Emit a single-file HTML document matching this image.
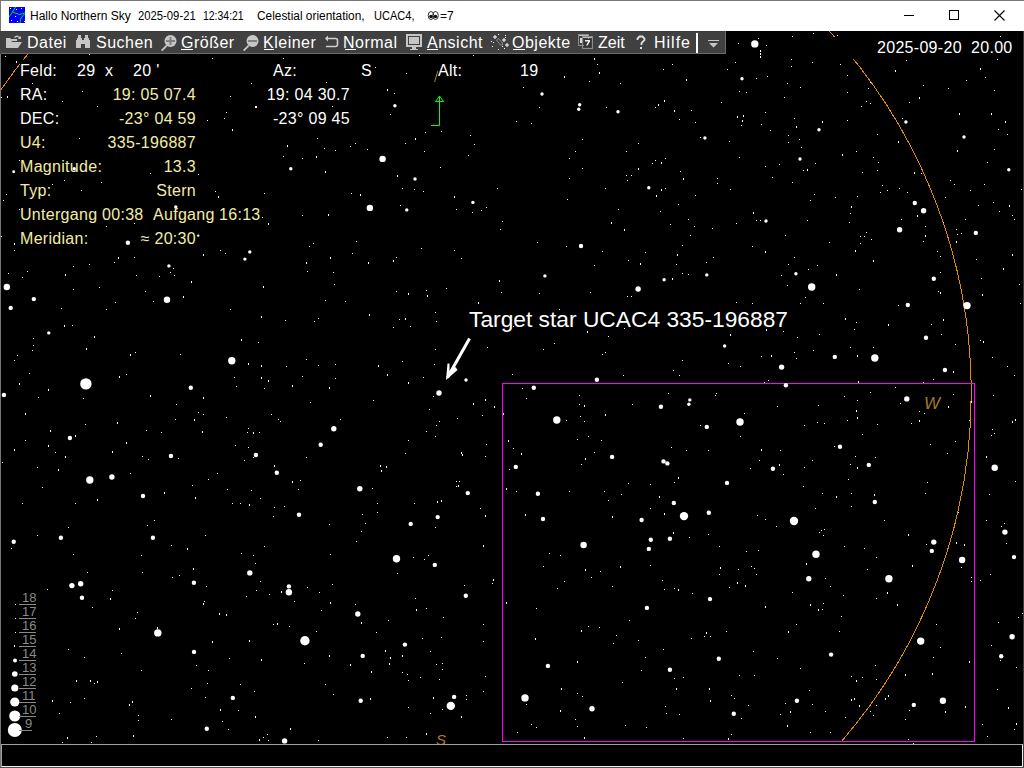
<!DOCTYPE html>
<html><head><meta charset="utf-8">
<style>
html,body{margin:0;padding:0;width:1024px;height:768px;overflow:hidden;background:#000;}
body{position:relative;font-family:"Liberation Sans",sans-serif;}
.a{position:absolute;white-space:pre;line-height:1;}
.t{position:absolute;top:10px;font-size:12px;color:#000;white-space:pre;line-height:1;transform-origin:0 0;}
.m{position:absolute;top:35px;font-size:16px;color:#fff;white-space:pre;line-height:16px;letter-spacing:0.5px;}
.ul{position:absolute;top:49px;height:1px;background:#fff;}
.w{color:#fff;font-size:16px;letter-spacing:0.3px;}
.y{color:#f2eca8;font-size:16px;letter-spacing:0.3px;}
.lg{position:absolute;color:#8a8a8a;font-size:13px;line-height:1;white-space:pre;left:22px;}
.lu{position:absolute;height:1px;background:#8a8a8a;left:19px;width:17px;}
</style></head>
<body>
<!-- title bar -->
<div class="a" style="left:0;top:0;width:1024px;height:31px;background:#fff"></div>
<div class="a" style="left:0;top:0;width:1024px;height:1px;background:#767676"></div>
<div class="a" style="left:0;top:0;width:1px;height:768px;background:#767676"></div>
<div class="a" style="left:1023px;top:31px;width:1px;height:737px;background:#3a3a3a"></div>

<svg class="a" style="left:9px;top:7px" width="16" height="16" viewBox="0 0 16 16">
<rect width="16" height="16" fill="#0000ff"/>
<path d="M6.5 0 L3.5 5 L0 10 M3.5 5 L10.5 7.5 L16 6 M15.5 7 L12 11 L11 16" stroke="#00e000" stroke-width="1" fill="none"/>
<g fill="#fff"><rect x="1" y="1" width="1" height="1"/><rect x="7" y="2" width="1" height="1"/><rect x="12" y="1" width="1" height="1"/>
<rect x="6" y="9" width="1" height="1"/><rect x="2" y="13" width="1" height="1"/><rect x="8" y="14" width="1" height="1"/><rect x="15" y="14" width="1" height="1"/></g>
</svg>
<div class="t" style="left:30px">Hallo Northern Sky</div>
<div class="t" style="left:138px;transform:scaleX(0.94)">2025-09-21</div>
<div class="t" style="left:203px;transform:scaleX(0.87)">12:34:21</div>
<div class="t" style="left:257px;transform:scaleX(0.99)">Celestial orientation,</div>
<div class="t" style="left:374px;transform:scaleX(0.92)">UCAC4,</div>
<svg class="a" style="left:427px;top:10px" width="14" height="11" viewBox="0 0 14 11">
<ellipse cx="4" cy="5.5" rx="2.8" ry="4" fill="none" stroke="#333" stroke-width="1"/><ellipse cx="8.5" cy="5.5" rx="2.8" ry="4" fill="none" stroke="#333" stroke-width="1"/>
<circle cx="4" cy="6.5" r="1.8" fill="#111"/><circle cx="8.5" cy="6.5" r="1.8" fill="#111"/>
</svg>
<div class="t" style="left:440px;transform:scaleX(1.0)">=7</div>

<div class="a" style="left:904px;top:15px;width:10px;height:1px;background:#000"></div>
<div class="a" style="left:949px;top:10px;width:8px;height:8px;border:1px solid #000"></div>
<svg class="a" style="left:994px;top:10px" width="11" height="11"><path d="M0.5 0.5 L10.5 10.5 M10.5 0.5 L0.5 10.5" stroke="#000" stroke-width="1.1"/></svg>

<!-- menu bar -->
<div class="a" style="left:0;top:31px;width:726px;height:23px;background:#404040"></div>
<div class="a" style="left:0;top:31px;width:726px;height:1px;background:#3a3a3a"></div>
<div class="a" style="left:1px;top:53px;width:725px;height:1px;background:#6b6b6b"></div>
<div class="a" style="left:725px;top:31px;width:1px;height:23px;background:#6b6b6b"></div>
<div class="a" style="left:696px;top:33px;width:2px;height:20px;background:#fff"></div>
<div class="a" style="left:708px;top:40px;width:11px;height:1px;background:#c8c8c8"></div>
<svg class="a" style="left:709px;top:43px" width="9" height="5"><path d="M0 0 L9 0 L4.5 4.5 Z" fill="#c8c8c8"/></svg>

<!-- menu icons -->
<svg class="a" style="left:0;top:31px" width="726" height="23" viewBox="0 31 726 23">
<g fill="#c6c6c6" stroke="none">
 <!-- folder -->
 <path d="M6 38 h4 l1 1 h6 v2 h-5 l-3 5 v2 h-3 z"/>
 <path d="M9 42 h13 l-4 6 h-12 z"/>
 <path d="M14 37 q3 -3 6 0 l1 -1 v3 h-3 l1 -1 q-2 -2 -4 0 z"/>
 <!-- binoculars -->
 <path d="M78 35 h3 v3 h1 v2 h2 v-2 h1 v-3 h3 v3 h1 v2 h1 v8 h-5 v-4 h-4 v4 h-5 v-8 h1 v-2 h1 z"/>
 <!-- magnifier + -->
 <circle cx="170.5" cy="41" r="6"/>
 <path d="M161 50 l5 -5 l1.3 1.3 l-5 5 z"/>
 <!-- magnifier - -->
 <circle cx="252.5" cy="41" r="6"/>
 <path d="M243 50 l5 -5 l1.3 1.3 l-5 5 z"/>
 <!-- monitor -->
 <path d="M406 34 h16 v13 h-16 z M408 36 v9 h12 v-9 z"/>
 <path d="M409 37 h10 v7 h-10 z"/>
 <rect x="412" y="47" width="4" height="2"/><rect x="410" y="49" width="8" height="1"/>
</g>
<g fill="#808080">
 <rect x="166" y="40" width="9" height="2"/><rect x="169.5" y="37" width="2" height="8"/>
 <rect x="248" y="40" width="9" height="2"/>
</g>
<!-- undo -->
<path d="M326 38.5 h9.5 q2 0 2 2 v4 q0 2 -2 2 h-9.5" fill="none" stroke="#d0d0d0" stroke-width="1.6"/>
<path d="M325 38.5 l3 -3 v6 z" fill="#d0d0d0"/>
<!-- stars icon -->
<g fill="#fff">
 <path d="M493 36.5 h1.5 v-1.5 h1 v1.5 h1.5 v1 h-1.5 v1.5 h-1 v-1.5 h-1.5 z"/>
 <path d="M502 39.5 h1.5 v-1.5 h1 v1.5 h1.5 v1 h-1.5 v1.5 h-1 v-1.5 h-1.5 z"/>
 <path d="M505 44.5 h1.5 v-1.5 h1 v1.5 h1.5 v1 h-1.5 v1.5 h-1 v-1.5 h-1.5 z"/>
 <rect x="498" y="34" width="1" height="1"/><rect x="505" y="35" width="1" height="1"/><rect x="505" y="37" width="1" height="1"/>
 <rect x="491" y="41" width="1" height="1"/><rect x="493" y="42" width="1" height="1"/><rect x="492" y="46" width="1" height="1"/>
 <rect x="502" y="46" width="1" height="1"/><rect x="504" y="48" width="1" height="1"/><rect x="498" y="49" width="1" height="1"/>
</g>
<path d="M496.5 40 l2 -1.5 l4 4.5 v2 h-2 z" fill="none" stroke="#8a8a8a" stroke-width="1"/>
<!-- calendar -->
<g fill="none" stroke="#8c8c8c" stroke-width="1">
 <rect x="578.5" y="34.5" width="10" height="11"/>
 <rect x="582.5" y="36.5" width="10" height="12"/>
</g>
<rect x="579" y="35" width="9" height="1" fill="#bbb"/>
<rect x="583" y="37" width="9" height="1" fill="#bbb"/>
<rect x="584" y="39" width="7" height="8" fill="#333"/>
<path d="M585 40 h5 v1.5 l-2.5 4 h-1.5 l2.2 -4 h-3.2 z" fill="#eee"/>
<rect x="580" y="38" width="2" height="5" fill="#ddd"/>
<!-- question mark -->
<path d="M637.5 40 v-1.5 l2 -2 h3 l2 2 v1.5 l-3 3 v2" fill="none" stroke="#e0e0e0" stroke-width="1.8"/>
<rect x="640" y="47" width="2" height="2" fill="#e0e0e0"/>
</svg>

<div class="m" style="left:27px">Datei</div>
<div class="m" style="left:96px">Suchen</div>
<div class="m" style="left:181px">Größer</div>
<div class="m" style="left:263px">Kleiner</div>
<div class="m" style="left:343px">Normal</div>
<div class="m" style="left:427px">Ansicht</div>
<div class="m" style="left:512px">Objekte</div>
<div class="m" style="left:598px;letter-spacing:0">Zeit</div>
<div class="m" style="left:654px;letter-spacing:1px">Hilfe</div>
<div class="ul" style="left:181px;width:12px"></div>
<div class="ul" style="left:264px;width:10px"></div>
<div class="ul" style="left:345px;width:11px"></div>
<div class="ul" style="left:427px;width:11px"></div>
<div class="ul" style="left:513px;width:12px"></div>

<!-- sky overlay -->
<svg class="a" style="left:0;top:0" width="1024" height="768" viewBox="0 0 1024 768">
<defs><clipPath id="sky"><rect x="1" y="54" width="1022" height="690"/><rect x="726" y="31" width="297" height="23"/></clipPath></defs>
<g clip-path="url(#sky)">
<path d="M829.2 31 A532.5 532.5 0 0 1 841.4 741.5 M27.7 54.2 A532.5 532.5 0 0 0 1.2 89.4" fill="none" stroke="#e08c00" stroke-width="1" shape-rendering="crispEdges"/>
<rect x="20" y="60" width="8" height="5" fill="#000"/>
<rect x="834" y="37" width="189" height="22" fill="#000"/>
<rect x="1" y="590" width="48" height="154" fill="#000"/>
<path d="M437.8 71 L434.6 82" stroke="#b08020" stroke-width="1"/>
<rect x="502.5" y="383.5" width="472" height="358" fill="none" stroke="#ff00ff" stroke-width="1"/>
<!-- green arrow -->
<path d="M431 125.5 H439.5 V96" fill="none" stroke="#00ff00" stroke-width="1"/>
<path d="M435.5 101.5 H443.5 L439.5 96 Z" fill="none" stroke="#00ff00" stroke-width="1"/>
<!-- target pointer arrow -->
<path d="M469.5 338.5 L447.5 377.5" stroke="#fff" stroke-width="3" stroke-linecap="butt"/>
<path d="M446 380 L447.5 363.5 L449.5 363.5 L449.5 371 L455.5 367 L457.5 370 Z" fill="#fff"/>
<text x="436" y="745" font-family="Liberation Sans" font-style="italic" font-size="15" fill="#b07820">S</text>
<text x="924" y="409" font-family="Liberation Sans" font-style="italic" font-size="17" fill="#a07828">W</text>
</g>
<g fill="#fff" clip-path="url(#sky)">
<rect x="5" y="56" width="1" height="1"/>
<rect x="16" y="61" width="1" height="2"/>
<rect x="89" y="54" width="1" height="1"/>
<rect x="82" y="91" width="1" height="1"/>
<rect x="7" y="96" width="1" height="2"/>
<rect x="1" y="97" width="1" height="1"/>
<rect x="62" y="101" width="1" height="1"/>
<rect x="97" y="106" width="1" height="1"/>
<rect x="32" y="83" width="1" height="1"/>
<rect x="79" y="138" width="1" height="1"/>
<rect x="19" y="160" width="1" height="1"/>
<circle cx="13.7" cy="171.8" r="1.45"/>
<circle cx="74.2" cy="168.8" r="1.7"/>
<rect x="150" y="173" width="1" height="1"/>
<rect x="198" y="174" width="1" height="1"/>
<rect x="52" y="184" width="1" height="1"/>
<rect x="64" y="180" width="1" height="1"/>
<rect x="101" y="182" width="1" height="1"/>
<rect x="81" y="190" width="1" height="1"/>
<rect x="6" y="194" width="1" height="1"/>
<rect x="3" y="200" width="1" height="1"/>
<rect x="212" y="58" width="1" height="1"/>
<rect x="283" y="58" width="1" height="1"/>
<rect x="375" y="67" width="1" height="1"/>
<rect x="251" y="83" width="1" height="1"/>
<rect x="326" y="82" width="1" height="1"/>
<rect x="230" y="96" width="1" height="1"/>
<rect x="387" y="89" width="1" height="2"/>
<rect x="394" y="93" width="1" height="1"/>
<rect x="255" y="106" width="2" height="2"/>
<rect x="332" y="106" width="1" height="1"/>
<circle cx="394.9" cy="105.8" r="1.7"/>
<rect x="226" y="112" width="1" height="1"/>
<rect x="224" y="118" width="1" height="1"/>
<rect x="207" y="120" width="1" height="1"/>
<rect x="390" y="114" width="1" height="1"/>
<rect x="232" y="129" width="1" height="2"/>
<rect x="317" y="138" width="1" height="1"/>
<rect x="287" y="145" width="1" height="2"/>
<rect x="324" y="148" width="1" height="1"/>
<rect x="335" y="150" width="1" height="1"/>
<rect x="350" y="146" width="1" height="1"/>
<rect x="355" y="143" width="1" height="1"/>
<rect x="367" y="149" width="1" height="1"/>
<rect x="283" y="156" width="1" height="1"/>
<rect x="302" y="158" width="1" height="1"/>
<rect x="316" y="156" width="1" height="2"/>
<circle cx="382.6" cy="158.9" r="3.2"/>
<circle cx="290.8" cy="168.8" r="1.7"/>
<rect x="325" y="171" width="1" height="2"/>
<rect x="397" y="175" width="1" height="2"/>
<rect x="215" y="191" width="1" height="1"/>
<rect x="218" y="196" width="1" height="2"/>
<rect x="264" y="193" width="1" height="1"/>
<rect x="351" y="193" width="1" height="1"/>
<rect x="360" y="194" width="1" height="2"/>
<rect x="419" y="55" width="1" height="1"/>
<rect x="473" y="55" width="1" height="1"/>
<rect x="594" y="58" width="1" height="2"/>
<rect x="406" y="73" width="1" height="1"/>
<rect x="564" y="76" width="1" height="2"/>
<rect x="589" y="81" width="1" height="1"/>
<rect x="523" y="87" width="1" height="1"/>
<circle cx="542" cy="94" r="1.7"/>
<circle cx="579.7" cy="104.8" r="1.7"/>
<circle cx="578.7" cy="109.3" r="1.7"/>
<rect x="539" y="107" width="1" height="1"/>
<rect x="516" y="121" width="1" height="1"/>
<rect x="531" y="123" width="1" height="1"/>
<rect x="425" y="132" width="1" height="1"/>
<rect x="441" y="131" width="1" height="1"/>
<rect x="470" y="135" width="1" height="1"/>
<rect x="415" y="138" width="1" height="2"/>
<rect x="405" y="143" width="1" height="1"/>
<rect x="474" y="144" width="1" height="1"/>
<rect x="582" y="139" width="1" height="1"/>
<rect x="424" y="151" width="1" height="1"/>
<rect x="468" y="155" width="1" height="1"/>
<rect x="575" y="151" width="1" height="1"/>
<rect x="569" y="158" width="1" height="1"/>
<rect x="440" y="167" width="1" height="1"/>
<rect x="582" y="168" width="1" height="1"/>
<circle cx="415" cy="179" r="1.7"/>
<rect x="402" y="188" width="1" height="1"/>
<rect x="414" y="189" width="1" height="1"/>
<rect x="423" y="191" width="1" height="1"/>
<rect x="497" y="188" width="1" height="1"/>
<rect x="569" y="178" width="1" height="1"/>
<rect x="454" y="196" width="1" height="2"/>
<circle cx="472.9" cy="202.4" r="1.7"/>
<rect x="567" y="199" width="1" height="1"/>
<rect x="760" y="56" width="1" height="2"/>
<rect x="791" y="59" width="1" height="1"/>
<rect x="791" y="66" width="1" height="1"/>
<rect x="735" y="62" width="1" height="1"/>
<rect x="672" y="64" width="1" height="1"/>
<rect x="663" y="69" width="1" height="1"/>
<rect x="727" y="69" width="1" height="1"/>
<rect x="686" y="79" width="1" height="2"/>
<circle cx="742" cy="78.8" r="1.7"/>
<rect x="756" y="78" width="1" height="1"/>
<rect x="767" y="76" width="1" height="1"/>
<rect x="787" y="83" width="1" height="1"/>
<rect x="620" y="83" width="1" height="1"/>
<rect x="739" y="91" width="1" height="1"/>
<rect x="746" y="92" width="1" height="1"/>
<rect x="784" y="97" width="1" height="1"/>
<rect x="664" y="100" width="1" height="2"/>
<rect x="658" y="104" width="1" height="2"/>
<rect x="655" y="107" width="1" height="1"/>
<rect x="721" y="102" width="1" height="1"/>
<rect x="606" y="107" width="1" height="1"/>
<circle cx="618" cy="111.8" r="1.7"/>
<rect x="674" y="110" width="1" height="2"/>
<rect x="691" y="110" width="1" height="1"/>
<rect x="765" y="112" width="1" height="1"/>
<rect x="737" y="116" width="1" height="2"/>
<rect x="743" y="115" width="1" height="2"/>
<rect x="742" y="120" width="1" height="2"/>
<rect x="741" y="125" width="1" height="1"/>
<rect x="761" y="124" width="1" height="1"/>
<rect x="794" y="118" width="1" height="1"/>
<rect x="796" y="126" width="1" height="2"/>
<rect x="679" y="119" width="1" height="1"/>
<rect x="695" y="122" width="1" height="1"/>
<rect x="770" y="130" width="1" height="1"/>
<rect x="788" y="135" width="1" height="1"/>
<rect x="788" y="142" width="1" height="1"/>
<rect x="799" y="139" width="1" height="1"/>
<circle cx="704.9" cy="138" r="1.7"/>
<rect x="700" y="137" width="1" height="1"/>
<rect x="729" y="141" width="1" height="1"/>
<rect x="638" y="143" width="1" height="1"/>
<rect x="626" y="151" width="1" height="1"/>
<rect x="739" y="157" width="1" height="1"/>
<rect x="665" y="158" width="1" height="1"/>
<rect x="655" y="160" width="1" height="1"/>
<rect x="652" y="163" width="1" height="1"/>
<rect x="661" y="162" width="1" height="2"/>
<rect x="638" y="168" width="1" height="2"/>
<rect x="765" y="166" width="1" height="1"/>
<rect x="779" y="164" width="1" height="1"/>
<rect x="680" y="171" width="1" height="1"/>
<rect x="626" y="175" width="1" height="1"/>
<rect x="631" y="175" width="1" height="1"/>
<rect x="627" y="180" width="1" height="1"/>
<rect x="683" y="178" width="1" height="2"/>
<rect x="717" y="178" width="1" height="1"/>
<rect x="717" y="183" width="1" height="1"/>
<rect x="772" y="177" width="1" height="1"/>
<rect x="792" y="182" width="1" height="1"/>
<rect x="605" y="188" width="1" height="1"/>
<circle cx="648.8" cy="187.8" r="1.7"/>
<rect x="661" y="189" width="1" height="2"/>
<rect x="665" y="188" width="1" height="1"/>
<rect x="656" y="195" width="1" height="2"/>
<rect x="695" y="195" width="1" height="1"/>
<rect x="730" y="189" width="1" height="1"/>
<rect x="812" y="62" width="1" height="1"/>
<rect x="840" y="64" width="1" height="1"/>
<rect x="906" y="60" width="1" height="1"/>
<rect x="997" y="59" width="1" height="1"/>
<rect x="895" y="70" width="1" height="2"/>
<rect x="980" y="68" width="1" height="2"/>
<rect x="985" y="77" width="1" height="1"/>
<rect x="847" y="75" width="1" height="1"/>
<rect x="966" y="80" width="1" height="1"/>
<rect x="800" y="87" width="1" height="1"/>
<rect x="870" y="82" width="1" height="1"/>
<rect x="868" y="88" width="1" height="1"/>
<rect x="847" y="92" width="1" height="1"/>
<rect x="923" y="85" width="1" height="1"/>
<rect x="948" y="88" width="1" height="1"/>
<rect x="994" y="90" width="1" height="1"/>
<rect x="919" y="97" width="1" height="2"/>
<rect x="909" y="102" width="1" height="1"/>
<rect x="866" y="101" width="1" height="1"/>
<rect x="870" y="103" width="1" height="1"/>
<rect x="861" y="106" width="1" height="1"/>
<rect x="822" y="121" width="1" height="2"/>
<rect x="847" y="120" width="1" height="1"/>
<circle cx="819" cy="129.8" r="1.7"/>
<rect x="902" y="118" width="1" height="1"/>
<circle cx="905.9" cy="122" r="1.7"/>
<rect x="959" y="113" width="1" height="2"/>
<rect x="991" y="113" width="1" height="2"/>
<rect x="998" y="129" width="1" height="1"/>
<rect x="877" y="134" width="1" height="1"/>
<rect x="898" y="141" width="1" height="2"/>
<circle cx="964" cy="137" r="1.7"/>
<rect x="801" y="147" width="1" height="1"/>
<rect x="856" y="151" width="1" height="1"/>
<rect x="842" y="154" width="1" height="2"/>
<rect x="957" y="150" width="1" height="2"/>
<rect x="994" y="149" width="1" height="1"/>
<rect x="873" y="157" width="1" height="1"/>
<rect x="878" y="162" width="1" height="1"/>
<rect x="815" y="163" width="1" height="1"/>
<rect x="803" y="170" width="1" height="1"/>
<rect x="807" y="169" width="1" height="2"/>
<rect x="862" y="172" width="1" height="1"/>
<rect x="877" y="170" width="1" height="1"/>
<rect x="914" y="172" width="1" height="2"/>
<rect x="921" y="173" width="1" height="1"/>
<rect x="987" y="162" width="1" height="1"/>
<rect x="950" y="180" width="1" height="1"/>
<rect x="954" y="184" width="1" height="1"/>
<rect x="984" y="184" width="1" height="1"/>
<rect x="970" y="190" width="1" height="1"/>
<rect x="882" y="185" width="1" height="1"/>
<rect x="887" y="190" width="1" height="1"/>
<rect x="899" y="188" width="1" height="1"/>
<rect x="880" y="192" width="1" height="1"/>
<rect x="907" y="192" width="1" height="1"/>
<rect x="814" y="194" width="1" height="1"/>
<rect x="835" y="197" width="1" height="1"/>
<rect x="857" y="196" width="1" height="1"/>
<rect x="945" y="197" width="1" height="1"/>
<rect x="810" y="200" width="1" height="1"/>
<rect x="993" y="202" width="1" height="1"/>
<rect x="1005" y="121" width="1" height="2"/>
<rect x="1007" y="134" width="1" height="1"/>
<circle cx="1008.8" cy="169.8" r="1.7"/>
<rect x="1021" y="189" width="1" height="1"/>
<circle cx="175.8" cy="207" r="1.7"/>
<rect x="19" y="209" width="1" height="1"/>
<rect x="106" y="226" width="1" height="1"/>
<rect x="134" y="223" width="1" height="1"/>
<rect x="1" y="236" width="1" height="1"/>
<rect x="14" y="243" width="1" height="2"/>
<rect x="14" y="250" width="1" height="1"/>
<circle cx="127.9" cy="242.7" r="2.2"/>
<circle cx="198.2" cy="235.6" r="1.2"/>
<rect x="118" y="257" width="1" height="2"/>
<rect x="114" y="262" width="1" height="1"/>
<rect x="134" y="257" width="1" height="1"/>
<circle cx="168.9" cy="265.9" r="1.7"/>
<rect x="173" y="268" width="1" height="1"/>
<rect x="170" y="272" width="1" height="1"/>
<rect x="174" y="275" width="1" height="1"/>
<rect x="73" y="266" width="1" height="1"/>
<rect x="89" y="264" width="1" height="1"/>
<rect x="8" y="273" width="1" height="1"/>
<rect x="27" y="271" width="1" height="1"/>
<rect x="22" y="277" width="1" height="1"/>
<rect x="65" y="274" width="1" height="2"/>
<rect x="136" y="275" width="1" height="1"/>
<rect x="159" y="276" width="1" height="1"/>
<rect x="191" y="281" width="1" height="2"/>
<circle cx="6.8" cy="287" r="3.2"/>
<rect x="73" y="289" width="1" height="1"/>
<rect x="99" y="287" width="1" height="1"/>
<rect x="145" y="291" width="1" height="1"/>
<circle cx="33.8" cy="299.1" r="2.2"/>
<circle cx="167" cy="299.7" r="3.2"/>
<rect x="183" y="296" width="1" height="2"/>
<rect x="153" y="301" width="1" height="1"/>
<rect x="115" y="302" width="1" height="1"/>
<circle cx="10.7" cy="307.9" r="2.2"/>
<rect x="61" y="308" width="1" height="1"/>
<rect x="106" y="309" width="1" height="1"/>
<rect x="64" y="325" width="1" height="2"/>
<rect x="72" y="325" width="1" height="1"/>
<circle cx="48.8" cy="332.9" r="1.7"/>
<rect x="33" y="338" width="1" height="1"/>
<rect x="94" y="336" width="1" height="2"/>
<rect x="33" y="345" width="1" height="1"/>
<rect x="32" y="350" width="1" height="1"/>
<rect x="86" y="348" width="1" height="2"/>
<rect x="135" y="352" width="1" height="1"/>
<circle cx="369.9" cy="207.9" r="3.2"/>
<rect x="262" y="217" width="1" height="1"/>
<rect x="268" y="223" width="1" height="2"/>
<rect x="302" y="215" width="1" height="1"/>
<rect x="328" y="214" width="1" height="2"/>
<rect x="220" y="250" width="1" height="1"/>
<rect x="225" y="253" width="1" height="1"/>
<rect x="203" y="254" width="1" height="2"/>
<circle cx="249.8" cy="251.9" r="1.7"/>
<circle cx="244.9" cy="259.1" r="1.7"/>
<rect x="309" y="246" width="1" height="1"/>
<rect x="313" y="243" width="1" height="1"/>
<rect x="356" y="241" width="1" height="1"/>
<rect x="352" y="253" width="1" height="1"/>
<rect x="330" y="257" width="1" height="2"/>
<rect x="306" y="262" width="1" height="2"/>
<rect x="368" y="262" width="1" height="2"/>
<rect x="393" y="260" width="1" height="2"/>
<rect x="396" y="257" width="1" height="1"/>
<rect x="307" y="271" width="1" height="1"/>
<rect x="333" y="272" width="1" height="1"/>
<rect x="263" y="286" width="1" height="2"/>
<rect x="334" y="284" width="1" height="1"/>
<rect x="396" y="291" width="1" height="1"/>
<rect x="325" y="300" width="1" height="1"/>
<rect x="345" y="301" width="1" height="1"/>
<rect x="230" y="309" width="1" height="1"/>
<rect x="261" y="316" width="1" height="2"/>
<rect x="285" y="320" width="1" height="1"/>
<rect x="314" y="321" width="1" height="1"/>
<rect x="318" y="318" width="1" height="1"/>
<rect x="369" y="314" width="1" height="2"/>
<rect x="399" y="319" width="1" height="1"/>
<rect x="393" y="327" width="1" height="1"/>
<rect x="241" y="339" width="1" height="2"/>
<rect x="258" y="342" width="1" height="1"/>
<circle cx="406.8" cy="209.9" r="1.7"/>
<rect x="456" y="209" width="1" height="1"/>
<rect x="472" y="212" width="1" height="1"/>
<rect x="481" y="210" width="1" height="1"/>
<rect x="486" y="207" width="1" height="1"/>
<rect x="502" y="221" width="1" height="1"/>
<rect x="500" y="229" width="1" height="1"/>
<rect x="421" y="248" width="1" height="1"/>
<rect x="454" y="250" width="1" height="1"/>
<rect x="461" y="258" width="1" height="1"/>
<rect x="537" y="242" width="1" height="1"/>
<rect x="566" y="246" width="1" height="1"/>
<circle cx="581" cy="246" r="2.2"/>
<rect x="594" y="265" width="1" height="1"/>
<circle cx="544.9" cy="275.9" r="1.7"/>
<rect x="499" y="280" width="1" height="2"/>
<rect x="426" y="290" width="1" height="1"/>
<rect x="427" y="295" width="1" height="2"/>
<rect x="446" y="288" width="1" height="1"/>
<rect x="408" y="293" width="1" height="2"/>
<rect x="501" y="292" width="1" height="1"/>
<rect x="539" y="293" width="1" height="1"/>
<rect x="590" y="292" width="1" height="1"/>
<rect x="478" y="302" width="1" height="2"/>
<rect x="559" y="309" width="1" height="1"/>
<rect x="435" y="312" width="1" height="1"/>
<rect x="405" y="318" width="1" height="2"/>
<rect x="436" y="321" width="1" height="1"/>
<rect x="410" y="326" width="1" height="1"/>
<rect x="513" y="326" width="1" height="1"/>
<rect x="587" y="331" width="1" height="2"/>
<rect x="554" y="343" width="1" height="1"/>
<rect x="487" y="347" width="1" height="1"/>
<rect x="543" y="349" width="1" height="1"/>
<rect x="435" y="349" width="1" height="1"/>
<rect x="678" y="204" width="1" height="1"/>
<rect x="618" y="209" width="1" height="1"/>
<rect x="660" y="211" width="1" height="1"/>
<rect x="753" y="212" width="1" height="2"/>
<circle cx="766" cy="221" r="1.7"/>
<rect x="756" y="220" width="1" height="1"/>
<rect x="760" y="220" width="1" height="1"/>
<rect x="611" y="222" width="1" height="2"/>
<rect x="688" y="219" width="1" height="1"/>
<rect x="670" y="224" width="1" height="1"/>
<rect x="694" y="226" width="1" height="1"/>
<rect x="736" y="223" width="1" height="1"/>
<rect x="712" y="228" width="1" height="1"/>
<rect x="624" y="229" width="1" height="2"/>
<rect x="690" y="235" width="1" height="1"/>
<rect x="785" y="235" width="1" height="1"/>
<rect x="682" y="245" width="1" height="1"/>
<rect x="752" y="246" width="1" height="1"/>
<rect x="602" y="251" width="1" height="1"/>
<rect x="645" y="252" width="1" height="1"/>
<rect x="677" y="254" width="1" height="2"/>
<rect x="765" y="251" width="1" height="2"/>
<rect x="713" y="257" width="1" height="1"/>
<rect x="794" y="257" width="1" height="1"/>
<rect x="628" y="260" width="1" height="1"/>
<rect x="640" y="263" width="1" height="2"/>
<rect x="676" y="264" width="1" height="1"/>
<rect x="706" y="262" width="1" height="1"/>
<rect x="788" y="264" width="1" height="1"/>
<circle cx="795.9" cy="273.7" r="1.7"/>
<circle cx="706.8" cy="274.9" r="1.7"/>
<rect x="682" y="273" width="1" height="1"/>
<rect x="688" y="274" width="1" height="1"/>
<circle cx="664.1" cy="279.8" r="1.7"/>
<rect x="672" y="278" width="1" height="2"/>
<rect x="781" y="275" width="1" height="1"/>
<circle cx="638.1" cy="289" r="2.7"/>
<rect x="787" y="285" width="1" height="1"/>
<rect x="627" y="296" width="1" height="1"/>
<rect x="631" y="296" width="1" height="1"/>
<rect x="736" y="302" width="1" height="1"/>
<rect x="752" y="303" width="1" height="1"/>
<rect x="624" y="328" width="1" height="1"/>
<rect x="766" y="329" width="1" height="2"/>
<rect x="783" y="331" width="1" height="1"/>
<rect x="608" y="336" width="1" height="1"/>
<rect x="730" y="334" width="1" height="2"/>
<rect x="797" y="337" width="1" height="1"/>
<circle cx="724.6" cy="346" r="1.7"/>
<rect x="794" y="352" width="1" height="1"/>
<rect x="605" y="352" width="1" height="1"/>
<circle cx="914.8" cy="203" r="2.2"/>
<rect x="851" y="206" width="1" height="2"/>
<rect x="850" y="213" width="1" height="1"/>
<rect x="807" y="220" width="1" height="1"/>
<rect x="849" y="222" width="1" height="1"/>
<circle cx="923.6" cy="210.8" r="2.7"/>
<rect x="917" y="215" width="1" height="2"/>
<rect x="901" y="219" width="1" height="1"/>
<rect x="978" y="205" width="1" height="1"/>
<rect x="999" y="211" width="1" height="1"/>
<rect x="965" y="219" width="1" height="1"/>
<rect x="943" y="222" width="1" height="1"/>
<circle cx="899.6" cy="229.8" r="2.7"/>
<rect x="925" y="226" width="1" height="1"/>
<rect x="925" y="235" width="1" height="2"/>
<rect x="923" y="241" width="1" height="1"/>
<rect x="956" y="229" width="1" height="1"/>
<rect x="957" y="234" width="1" height="1"/>
<rect x="961" y="233" width="1" height="1"/>
<rect x="956" y="241" width="1" height="2"/>
<circle cx="975.8" cy="232.9" r="2.2"/>
<rect x="866" y="232" width="1" height="1"/>
<rect x="860" y="236" width="1" height="1"/>
<rect x="864" y="236" width="1" height="1"/>
<rect x="871" y="239" width="1" height="1"/>
<rect x="860" y="243" width="1" height="1"/>
<rect x="829" y="242" width="1" height="1"/>
<rect x="855" y="250" width="1" height="2"/>
<rect x="937" y="251" width="1" height="1"/>
<rect x="940" y="256" width="1" height="1"/>
<rect x="873" y="260" width="1" height="2"/>
<rect x="817" y="265" width="1" height="1"/>
<rect x="808" y="269" width="1" height="1"/>
<rect x="976" y="259" width="1" height="1"/>
<rect x="836" y="274" width="1" height="2"/>
<rect x="940" y="272" width="1" height="1"/>
<circle cx="933.8" cy="278.8" r="2.2"/>
<rect x="981" y="278" width="1" height="1"/>
<circle cx="811.7" cy="287" r="3.7"/>
<rect x="859" y="289" width="1" height="1"/>
<rect x="938" y="291" width="1" height="1"/>
<rect x="940" y="292" width="1" height="2"/>
<rect x="982" y="294" width="1" height="2"/>
<rect x="805" y="297" width="1" height="1"/>
<rect x="800" y="303" width="1" height="1"/>
<rect x="823" y="303" width="1" height="1"/>
<rect x="898" y="305" width="1" height="1"/>
<circle cx="907.8" cy="305" r="2.2"/>
<circle cx="967" cy="305.6" r="3.7"/>
<rect x="845" y="318" width="1" height="2"/>
<rect x="856" y="322" width="1" height="1"/>
<rect x="854" y="329" width="1" height="1"/>
<rect x="888" y="324" width="1" height="2"/>
<rect x="943" y="319" width="1" height="2"/>
<rect x="931" y="324" width="1" height="1"/>
<rect x="819" y="334" width="1" height="1"/>
<rect x="941" y="334" width="1" height="1"/>
<circle cx="926" cy="337.8" r="2.2"/>
<rect x="980" y="340" width="1" height="1"/>
<rect x="983" y="341" width="1" height="2"/>
<rect x="955" y="344" width="1" height="1"/>
<rect x="813" y="350" width="1" height="1"/>
<rect x="850" y="347" width="1" height="1"/>
<rect x="873" y="347" width="1" height="1"/>
<rect x="1009" y="205" width="1" height="2"/>
<rect x="1012" y="215" width="1" height="1"/>
<rect x="1014" y="219" width="1" height="1"/>
<rect x="1012" y="254" width="1" height="2"/>
<rect x="1003" y="268" width="1" height="2"/>
<rect x="1019" y="284" width="1" height="1"/>
<rect x="1020" y="303" width="1" height="1"/>
<circle cx="800" cy="159" r="1.7"/>
<rect x="17" y="355" width="1" height="1"/>
<rect x="130" y="354" width="1" height="2"/>
<rect x="180" y="354" width="1" height="1"/>
<rect x="14" y="360" width="1" height="1"/>
<rect x="29" y="373" width="1" height="1"/>
<circle cx="85.9" cy="383.9" r="5.7"/>
<rect x="119" y="376" width="1" height="2"/>
<rect x="126" y="374" width="1" height="1"/>
<rect x="19" y="383" width="1" height="2"/>
<circle cx="3.9" cy="395" r="2.2"/>
<rect x="48" y="389" width="1" height="2"/>
<rect x="38" y="397" width="1" height="1"/>
<rect x="83" y="398" width="1" height="1"/>
<circle cx="190.8" cy="387.8" r="2.2"/>
<rect x="150" y="395" width="1" height="2"/>
<rect x="176" y="404" width="1" height="1"/>
<rect x="198" y="412" width="1" height="1"/>
<rect x="25" y="413" width="1" height="2"/>
<rect x="175" y="419" width="1" height="1"/>
<rect x="194" y="419" width="1" height="2"/>
<rect x="85" y="424" width="1" height="1"/>
<rect x="117" y="422" width="1" height="2"/>
<rect x="50" y="430" width="1" height="2"/>
<rect x="146" y="430" width="1" height="1"/>
<rect x="161" y="432" width="1" height="1"/>
<circle cx="69.9" cy="438" r="2.2"/>
<rect x="75" y="435" width="1" height="2"/>
<rect x="25" y="440" width="1" height="1"/>
<rect x="126" y="442" width="1" height="2"/>
<rect x="14" y="449" width="1" height="2"/>
<rect x="48" y="445" width="1" height="2"/>
<rect x="55" y="452" width="1" height="1"/>
<rect x="65" y="456" width="1" height="2"/>
<rect x="112" y="451" width="1" height="2"/>
<rect x="2" y="462" width="1" height="1"/>
<rect x="142" y="456" width="1" height="1"/>
<rect x="148" y="459" width="1" height="1"/>
<circle cx="170.9" cy="456" r="2.2"/>
<rect x="178" y="458" width="1" height="1"/>
<rect x="37" y="467" width="1" height="1"/>
<rect x="58" y="469" width="1" height="2"/>
<rect x="130" y="473" width="1" height="1"/>
<circle cx="89.8" cy="480" r="3.7"/>
<circle cx="111.9" cy="477" r="2.7"/>
<rect x="42" y="487" width="1" height="1"/>
<rect x="192" y="485" width="1" height="1"/>
<rect x="164" y="492" width="1" height="2"/>
<circle cx="143" cy="496" r="2.2"/>
<rect x="97" y="499" width="1" height="2"/>
<rect x="195" y="497" width="1" height="2"/>
<rect x="22" y="503" width="1" height="1"/>
<rect x="75" y="503" width="1" height="1"/>
<circle cx="231.8" cy="360.8" r="3.7"/>
<rect x="248" y="363" width="1" height="2"/>
<rect x="261" y="365" width="1" height="2"/>
<rect x="286" y="366" width="1" height="1"/>
<rect x="306" y="359" width="1" height="1"/>
<rect x="318" y="365" width="1" height="1"/>
<rect x="335" y="364" width="1" height="1"/>
<rect x="378" y="365" width="1" height="2"/>
<rect x="387" y="374" width="1" height="2"/>
<rect x="234" y="377" width="1" height="1"/>
<rect x="261" y="377" width="1" height="2"/>
<rect x="268" y="380" width="1" height="2"/>
<rect x="302" y="376" width="1" height="1"/>
<rect x="335" y="378" width="1" height="1"/>
<rect x="236" y="386" width="1" height="1"/>
<rect x="264" y="388" width="1" height="1"/>
<rect x="292" y="385" width="1" height="2"/>
<rect x="329" y="387" width="1" height="2"/>
<rect x="203" y="397" width="1" height="2"/>
<rect x="310" y="402" width="1" height="1"/>
<rect x="373" y="400" width="1" height="1"/>
<rect x="203" y="414" width="1" height="1"/>
<rect x="226" y="417" width="1" height="1"/>
<rect x="271" y="414" width="1" height="1"/>
<rect x="278" y="419" width="1" height="1"/>
<rect x="280" y="421" width="1" height="1"/>
<rect x="340" y="419" width="1" height="1"/>
<rect x="202" y="431" width="1" height="2"/>
<rect x="248" y="428" width="1" height="1"/>
<rect x="247" y="432" width="1" height="1"/>
<rect x="253" y="432" width="1" height="2"/>
<rect x="259" y="432" width="1" height="1"/>
<circle cx="333.8" cy="428.8" r="2.7"/>
<rect x="235" y="445" width="1" height="1"/>
<rect x="248" y="447" width="1" height="1"/>
<circle cx="320.7" cy="444.8" r="2.2"/>
<circle cx="255.9" cy="455" r="2.2"/>
<rect x="253" y="457" width="1" height="1"/>
<rect x="244" y="460" width="1" height="1"/>
<rect x="306" y="457" width="1" height="1"/>
<rect x="274" y="465" width="1" height="2"/>
<circle cx="276.8" cy="472.8" r="2.2"/>
<rect x="217" y="473" width="1" height="1"/>
<rect x="208" y="479" width="1" height="1"/>
<rect x="380" y="465" width="1" height="2"/>
<rect x="386" y="466" width="1" height="2"/>
<rect x="381" y="470" width="1" height="2"/>
<rect x="292" y="481" width="1" height="2"/>
<rect x="300" y="480" width="1" height="1"/>
<rect x="227" y="489" width="1" height="1"/>
<rect x="251" y="490" width="1" height="1"/>
<rect x="298" y="489" width="1" height="1"/>
<circle cx="359.8" cy="488.8" r="2.7"/>
<rect x="372" y="488" width="1" height="1"/>
<rect x="260" y="498" width="1" height="1"/>
<rect x="232" y="503" width="1" height="1"/>
<rect x="240" y="503" width="1" height="1"/>
<rect x="377" y="503" width="1" height="1"/>
<rect x="402" y="361" width="1" height="1"/>
<rect x="434" y="364" width="1" height="1"/>
<rect x="423" y="377" width="1" height="1"/>
<rect x="408" y="382" width="1" height="2"/>
<circle cx="466" cy="380" r="1.7"/>
<circle cx="439" cy="393" r="2.7"/>
<rect x="433" y="396" width="1" height="1"/>
<rect x="512" y="374" width="1" height="1"/>
<circle cx="596.9" cy="379.8" r="2.2"/>
<circle cx="533.8" cy="387.8" r="2.2"/>
<rect x="522" y="388" width="1" height="1"/>
<rect x="485" y="399" width="1" height="2"/>
<rect x="473" y="403" width="1" height="2"/>
<rect x="494" y="406" width="1" height="2"/>
<rect x="526" y="398" width="1" height="1"/>
<rect x="429" y="409" width="1" height="1"/>
<rect x="503" y="413" width="1" height="2"/>
<rect x="482" y="415" width="1" height="1"/>
<rect x="457" y="418" width="1" height="1"/>
<rect x="439" y="421" width="1" height="1"/>
<rect x="436" y="425" width="1" height="1"/>
<rect x="579" y="395" width="1" height="1"/>
<rect x="579" y="404" width="1" height="1"/>
<rect x="584" y="405" width="1" height="2"/>
<circle cx="556.8" cy="420" r="3.7"/>
<rect x="566" y="420" width="1" height="1"/>
<rect x="580" y="416" width="1" height="1"/>
<rect x="584" y="421" width="1" height="1"/>
<rect x="426" y="431" width="1" height="1"/>
<rect x="435" y="436" width="1" height="1"/>
<rect x="408" y="440" width="1" height="1"/>
<rect x="508" y="440" width="1" height="2"/>
<rect x="577" y="439" width="1" height="1"/>
<rect x="588" y="436" width="1" height="1"/>
<rect x="486" y="444" width="1" height="1"/>
<rect x="513" y="448" width="1" height="1"/>
<rect x="461" y="452" width="1" height="2"/>
<rect x="462" y="454" width="1" height="2"/>
<rect x="405" y="453" width="1" height="1"/>
<rect x="485" y="456" width="1" height="1"/>
<rect x="521" y="453" width="1" height="2"/>
<rect x="594" y="452" width="1" height="1"/>
<rect x="585" y="458" width="1" height="2"/>
<rect x="581" y="464" width="1" height="1"/>
<circle cx="515.8" cy="466.9" r="2.2"/>
<rect x="509" y="469" width="1" height="1"/>
<rect x="456" y="481" width="1" height="1"/>
<rect x="459" y="481" width="1" height="1"/>
<rect x="456" y="486" width="1" height="1"/>
<rect x="458" y="485" width="1" height="2"/>
<circle cx="467.8" cy="493.1" r="2.2"/>
<rect x="506" y="488" width="1" height="2"/>
<rect x="516" y="491" width="1" height="1"/>
<circle cx="537.9" cy="493.8" r="2.2"/>
<rect x="569" y="491" width="1" height="1"/>
<rect x="437" y="501" width="1" height="2"/>
<rect x="441" y="500" width="1" height="2"/>
<rect x="414" y="503" width="1" height="1"/>
<rect x="602" y="354" width="1" height="1"/>
<rect x="682" y="360" width="1" height="1"/>
<rect x="728" y="363" width="1" height="1"/>
<rect x="740" y="366" width="1" height="1"/>
<rect x="761" y="356" width="1" height="1"/>
<rect x="771" y="355" width="1" height="2"/>
<rect x="796" y="358" width="1" height="1"/>
<circle cx="781.6" cy="367.1" r="2.7"/>
<rect x="623" y="375" width="1" height="1"/>
<rect x="673" y="370" width="1" height="1"/>
<rect x="679" y="375" width="1" height="1"/>
<rect x="768" y="380" width="1" height="1"/>
<rect x="764" y="382" width="1" height="1"/>
<circle cx="785.9" cy="385.3" r="2.2"/>
<rect x="668" y="393" width="1" height="1"/>
<rect x="716" y="393" width="1" height="1"/>
<rect x="715" y="395" width="1" height="1"/>
<circle cx="689.8" cy="399.9" r="1.7"/>
<circle cx="688.9" cy="404.2" r="1.7"/>
<circle cx="660.9" cy="406.7" r="2.2"/>
<rect x="632" y="404" width="1" height="1"/>
<rect x="605" y="414" width="1" height="2"/>
<rect x="777" y="406" width="1" height="1"/>
<rect x="744" y="413" width="1" height="1"/>
<circle cx="740" cy="422" r="3.7"/>
<circle cx="706.8" cy="426.9" r="2.2"/>
<rect x="700" y="425" width="1" height="1"/>
<rect x="601" y="440" width="1" height="1"/>
<rect x="740" y="436" width="1" height="1"/>
<rect x="671" y="447" width="1" height="1"/>
<rect x="686" y="450" width="1" height="1"/>
<rect x="708" y="450" width="1" height="1"/>
<rect x="761" y="449" width="1" height="2"/>
<rect x="780" y="450" width="1" height="1"/>
<circle cx="612.1" cy="456.9" r="2.2"/>
<circle cx="663.5" cy="461.4" r="2.2"/>
<circle cx="667.4" cy="463.4" r="2.2"/>
<rect x="759" y="460" width="1" height="1"/>
<rect x="779" y="464" width="1" height="2"/>
<rect x="750" y="468" width="1" height="1"/>
<circle cx="772.9" cy="468.8" r="2.2"/>
<rect x="783" y="474" width="1" height="1"/>
<rect x="678" y="477" width="1" height="2"/>
<rect x="674" y="482" width="1" height="1"/>
<circle cx="727" cy="482.9" r="2.2"/>
<rect x="628" y="483" width="1" height="1"/>
<rect x="650" y="484" width="1" height="1"/>
<rect x="604" y="491" width="1" height="1"/>
<rect x="621" y="494" width="1" height="1"/>
<rect x="659" y="496" width="1" height="2"/>
<rect x="608" y="500" width="1" height="1"/>
<circle cx="673.8" cy="503" r="2.2"/>
<circle cx="834.8" cy="356.9" r="2.2"/>
<rect x="857" y="355" width="1" height="2"/>
<circle cx="874.8" cy="358" r="3.7"/>
<rect x="992" y="357" width="1" height="1"/>
<circle cx="944.9" cy="370" r="2.2"/>
<rect x="953" y="371" width="1" height="2"/>
<rect x="933" y="379" width="1" height="1"/>
<rect x="923" y="382" width="1" height="1"/>
<rect x="858" y="381" width="1" height="2"/>
<rect x="895" y="387" width="1" height="1"/>
<rect x="870" y="392" width="1" height="1"/>
<rect x="844" y="396" width="1" height="1"/>
<rect x="857" y="400" width="1" height="1"/>
<rect x="818" y="405" width="1" height="1"/>
<circle cx="906.8" cy="398.9" r="2.7"/>
<rect x="900" y="403" width="1" height="1"/>
<rect x="953" y="394" width="1" height="1"/>
<rect x="948" y="406" width="1" height="2"/>
<rect x="971" y="401" width="1" height="2"/>
<rect x="993" y="395" width="1" height="1"/>
<rect x="856" y="410" width="1" height="2"/>
<rect x="857" y="417" width="1" height="2"/>
<rect x="919" y="411" width="1" height="1"/>
<rect x="924" y="413" width="1" height="1"/>
<rect x="847" y="420" width="1" height="1"/>
<rect x="919" y="420" width="1" height="2"/>
<rect x="911" y="423" width="1" height="1"/>
<rect x="969" y="420" width="1" height="1"/>
<rect x="804" y="425" width="1" height="1"/>
<rect x="817" y="422" width="1" height="1"/>
<rect x="824" y="423" width="1" height="1"/>
<rect x="877" y="424" width="1" height="1"/>
<rect x="862" y="434" width="1" height="1"/>
<rect x="992" y="429" width="1" height="1"/>
<rect x="994" y="433" width="1" height="1"/>
<rect x="991" y="435" width="1" height="1"/>
<rect x="955" y="441" width="1" height="1"/>
<rect x="930" y="444" width="1" height="1"/>
<rect x="834" y="446" width="1" height="1"/>
<circle cx="840" cy="446.8" r="2.2"/>
<rect x="947" y="453" width="1" height="1"/>
<rect x="855" y="456" width="1" height="1"/>
<rect x="875" y="457" width="1" height="1"/>
<rect x="812" y="460" width="1" height="1"/>
<rect x="986" y="456" width="1" height="2"/>
<rect x="804" y="467" width="1" height="1"/>
<rect x="850" y="464" width="1" height="1"/>
<rect x="857" y="467" width="1" height="2"/>
<circle cx="868.8" cy="464.9" r="2.2"/>
<circle cx="994.7" cy="467.7" r="3.2"/>
<rect x="848" y="479" width="1" height="1"/>
<rect x="927" y="482" width="1" height="1"/>
<rect x="803" y="486" width="1" height="1"/>
<rect x="822" y="493" width="1" height="1"/>
<rect x="851" y="493" width="1" height="1"/>
<rect x="836" y="496" width="1" height="2"/>
<rect x="874" y="494" width="1" height="2"/>
<rect x="925" y="493" width="1" height="1"/>
<rect x="989" y="494" width="1" height="1"/>
<circle cx="874.8" cy="502" r="2.2"/>
<rect x="1007" y="366" width="1" height="1"/>
<rect x="1014" y="375" width="1" height="1"/>
<rect x="1012" y="421" width="1" height="2"/>
<rect x="1015" y="419" width="1" height="2"/>
<rect x="1015" y="481" width="1" height="1"/>
<rect x="154" y="520" width="1" height="1"/>
<rect x="147" y="525" width="1" height="1"/>
<rect x="68" y="527" width="1" height="1"/>
<rect x="37" y="535" width="1" height="1"/>
<circle cx="13.7" cy="541.7" r="2.2"/>
<rect x="11" y="548" width="1" height="1"/>
<circle cx="60.9" cy="537.8" r="2.2"/>
<circle cx="152.9" cy="537.8" r="2.2"/>
<rect x="171" y="545" width="1" height="1"/>
<rect x="187" y="548" width="1" height="2"/>
<rect x="73" y="554" width="1" height="1"/>
<rect x="141" y="555" width="1" height="1"/>
<rect x="193" y="568" width="1" height="2"/>
<rect x="87" y="572" width="1" height="1"/>
<rect x="142" y="572" width="1" height="1"/>
<rect x="172" y="577" width="1" height="1"/>
<rect x="179" y="575" width="1" height="1"/>
<circle cx="71.9" cy="585.6" r="2.7"/>
<circle cx="80.7" cy="583.7" r="2.7"/>
<circle cx="193.9" cy="582.7" r="2.2"/>
<rect x="47" y="589" width="1" height="1"/>
<rect x="112" y="590" width="1" height="1"/>
<circle cx="82" cy="597.8" r="2.2"/>
<rect x="110" y="598" width="1" height="2"/>
<rect x="92" y="607" width="1" height="1"/>
<rect x="137" y="612" width="1" height="1"/>
<rect x="135" y="618" width="1" height="1"/>
<rect x="119" y="628" width="1" height="2"/>
<circle cx="157.8" cy="632.9" r="3.7"/>
<rect x="157" y="627" width="1" height="2"/>
<rect x="68" y="649" width="1" height="1"/>
<rect x="121" y="653" width="1" height="1"/>
<circle cx="194" cy="651.9" r="2.2"/>
<rect x="249" y="504" width="1" height="2"/>
<rect x="274" y="507" width="1" height="1"/>
<rect x="284" y="506" width="1" height="1"/>
<rect x="273" y="516" width="1" height="1"/>
<circle cx="299" cy="514.7" r="2.2"/>
<rect x="362" y="514" width="1" height="1"/>
<rect x="377" y="512" width="1" height="1"/>
<rect x="365" y="523" width="1" height="1"/>
<rect x="329" y="524" width="1" height="1"/>
<rect x="361" y="531" width="1" height="1"/>
<rect x="356" y="541" width="1" height="1"/>
<rect x="205" y="535" width="1" height="1"/>
<rect x="264" y="546" width="1" height="1"/>
<rect x="241" y="553" width="1" height="1"/>
<rect x="253" y="555" width="1" height="1"/>
<rect x="330" y="554" width="1" height="1"/>
<rect x="255" y="563" width="1" height="1"/>
<circle cx="396.5" cy="558.7" r="3.7"/>
<circle cx="249.8" cy="572.9" r="2.7"/>
<rect x="397" y="573" width="1" height="1"/>
<rect x="260" y="581" width="1" height="1"/>
<rect x="206" y="586" width="1" height="1"/>
<circle cx="288.9" cy="586.4" r="2.2"/>
<circle cx="288.9" cy="592.3" r="3.2"/>
<rect x="281" y="591" width="1" height="2"/>
<rect x="307" y="587" width="1" height="1"/>
<rect x="332" y="584" width="1" height="1"/>
<rect x="256" y="590" width="1" height="1"/>
<rect x="269" y="594" width="1" height="1"/>
<rect x="246" y="596" width="1" height="1"/>
<rect x="319" y="592" width="1" height="1"/>
<rect x="294" y="601" width="1" height="1"/>
<rect x="204" y="601" width="1" height="1"/>
<rect x="203" y="603" width="1" height="2"/>
<rect x="330" y="602" width="1" height="2"/>
<rect x="355" y="604" width="1" height="1"/>
<circle cx="357.8" cy="614" r="2.7"/>
<rect x="321" y="610" width="1" height="1"/>
<rect x="219" y="613" width="1" height="2"/>
<rect x="226" y="614" width="1" height="2"/>
<rect x="361" y="622" width="1" height="2"/>
<rect x="388" y="620" width="1" height="1"/>
<rect x="273" y="624" width="1" height="1"/>
<rect x="277" y="623" width="1" height="2"/>
<rect x="289" y="626" width="1" height="1"/>
<rect x="316" y="631" width="1" height="1"/>
<rect x="376" y="632" width="1" height="1"/>
<circle cx="304.9" cy="640.7" r="4.7"/>
<rect x="212" y="641" width="1" height="2"/>
<rect x="249" y="640" width="1" height="2"/>
<rect x="385" y="650" width="1" height="2"/>
<rect x="480" y="508" width="1" height="1"/>
<rect x="485" y="515" width="1" height="2"/>
<circle cx="437.7" cy="517.1" r="2.2"/>
<circle cx="410.7" cy="523.9" r="2.2"/>
<rect x="435" y="527" width="1" height="1"/>
<rect x="525" y="514" width="1" height="2"/>
<circle cx="543" cy="519" r="2.2"/>
<rect x="483" y="545" width="1" height="2"/>
<circle cx="583.6" cy="545" r="3.2"/>
<rect x="413" y="557" width="1" height="1"/>
<rect x="428" y="555" width="1" height="1"/>
<rect x="424" y="559" width="1" height="1"/>
<circle cx="434.8" cy="564.9" r="2.2"/>
<rect x="549" y="553" width="1" height="1"/>
<rect x="560" y="555" width="1" height="1"/>
<rect x="543" y="566" width="1" height="1"/>
<rect x="585" y="569" width="1" height="2"/>
<rect x="591" y="577" width="1" height="1"/>
<rect x="564" y="581" width="1" height="1"/>
<rect x="493" y="579" width="1" height="2"/>
<rect x="492" y="583" width="1" height="1"/>
<rect x="464" y="585" width="1" height="1"/>
<rect x="557" y="588" width="1" height="1"/>
<circle cx="465.8" cy="595.8" r="2.2"/>
<rect x="415" y="598" width="1" height="1"/>
<rect x="506" y="602" width="1" height="2"/>
<rect x="536" y="608" width="1" height="1"/>
<rect x="416" y="609" width="1" height="2"/>
<rect x="426" y="608" width="1" height="1"/>
<rect x="443" y="617" width="1" height="1"/>
<rect x="483" y="624" width="1" height="1"/>
<rect x="581" y="630" width="1" height="2"/>
<rect x="588" y="626" width="1" height="1"/>
<rect x="599" y="627" width="1" height="1"/>
<rect x="422" y="638" width="1" height="1"/>
<rect x="441" y="637" width="1" height="1"/>
<rect x="535" y="638" width="1" height="2"/>
<rect x="483" y="641" width="1" height="1"/>
<circle cx="404.9" cy="644.6" r="2.2"/>
<rect x="430" y="651" width="1" height="1"/>
<rect x="650" y="508" width="1" height="1"/>
<rect x="664" y="513" width="1" height="2"/>
<rect x="612" y="516" width="1" height="2"/>
<circle cx="641.6" cy="520" r="2.2"/>
<circle cx="684" cy="516.1" r="4.2"/>
<circle cx="708.8" cy="512.8" r="2.2"/>
<rect x="757" y="515" width="1" height="1"/>
<rect x="765" y="519" width="1" height="1"/>
<rect x="776" y="526" width="1" height="1"/>
<circle cx="794" cy="521" r="4.2"/>
<rect x="673" y="532" width="1" height="2"/>
<rect x="689" y="537" width="1" height="1"/>
<rect x="708" y="534" width="1" height="1"/>
<circle cx="650.8" cy="539.7" r="2.2"/>
<circle cx="669.9" cy="538.8" r="2.2"/>
<circle cx="648.8" cy="548.9" r="2.2"/>
<rect x="719" y="546" width="1" height="1"/>
<rect x="746" y="551" width="1" height="1"/>
<rect x="758" y="550" width="1" height="1"/>
<rect x="620" y="566" width="1" height="2"/>
<rect x="650" y="565" width="1" height="1"/>
<rect x="600" y="571" width="1" height="1"/>
<rect x="720" y="567" width="1" height="2"/>
<rect x="719" y="574" width="1" height="1"/>
<rect x="738" y="569" width="1" height="1"/>
<rect x="751" y="566" width="1" height="1"/>
<rect x="754" y="568" width="1" height="1"/>
<rect x="756" y="574" width="1" height="1"/>
<rect x="662" y="580" width="1" height="1"/>
<rect x="612" y="586" width="1" height="1"/>
<rect x="664" y="589" width="1" height="1"/>
<rect x="674" y="588" width="1" height="1"/>
<rect x="678" y="589" width="1" height="2"/>
<rect x="692" y="593" width="1" height="1"/>
<rect x="737" y="582" width="1" height="2"/>
<rect x="745" y="585" width="1" height="2"/>
<rect x="729" y="587" width="1" height="1"/>
<circle cx="710" cy="599.1" r="2.2"/>
<rect x="792" y="592" width="1" height="1"/>
<circle cx="646.9" cy="607.9" r="2.2"/>
<rect x="765" y="606" width="1" height="2"/>
<rect x="629" y="620" width="1" height="1"/>
<rect x="796" y="624" width="1" height="1"/>
<rect x="788" y="631" width="1" height="2"/>
<rect x="726" y="631" width="1" height="1"/>
<rect x="706" y="632" width="1" height="2"/>
<rect x="704" y="636" width="1" height="1"/>
<rect x="710" y="636" width="1" height="1"/>
<rect x="616" y="635" width="1" height="1"/>
<rect x="691" y="638" width="1" height="1"/>
<rect x="638" y="640" width="1" height="1"/>
<rect x="613" y="643" width="1" height="1"/>
<rect x="663" y="649" width="1" height="1"/>
<rect x="753" y="651" width="1" height="1"/>
<rect x="815" y="508" width="1" height="1"/>
<rect x="851" y="506" width="1" height="1"/>
<rect x="884" y="520" width="1" height="1"/>
<rect x="958" y="512" width="1" height="1"/>
<rect x="986" y="520" width="1" height="1"/>
<rect x="821" y="530" width="1" height="1"/>
<rect x="824" y="529" width="1" height="1"/>
<rect x="819" y="532" width="1" height="1"/>
<rect x="823" y="535" width="1" height="1"/>
<rect x="908" y="534" width="1" height="2"/>
<circle cx="933.8" cy="542.1" r="2.7"/>
<rect x="926" y="544" width="1" height="1"/>
<circle cx="931.8" cy="550.9" r="2.2"/>
<rect x="956" y="542" width="1" height="2"/>
<rect x="964" y="544" width="1" height="2"/>
<circle cx="962.1" cy="560" r="3.2"/>
<rect x="961" y="567" width="1" height="1"/>
<rect x="844" y="546" width="1" height="1"/>
<rect x="864" y="548" width="1" height="1"/>
<circle cx="816" cy="554.2" r="3.7"/>
<rect x="876" y="557" width="1" height="1"/>
<rect x="806" y="563" width="1" height="2"/>
<rect x="867" y="569" width="1" height="1"/>
<rect x="912" y="565" width="1" height="2"/>
<circle cx="808.8" cy="578.8" r="2.7"/>
<rect x="825" y="578" width="1" height="1"/>
<circle cx="888.9" cy="578.8" r="3.7"/>
<rect x="830" y="586" width="1" height="1"/>
<rect x="971" y="577" width="1" height="1"/>
<rect x="971" y="581" width="1" height="1"/>
<rect x="980" y="580" width="1" height="1"/>
<rect x="990" y="574" width="1" height="1"/>
<rect x="843" y="595" width="1" height="1"/>
<rect x="887" y="592" width="1" height="2"/>
<rect x="876" y="598" width="1" height="1"/>
<rect x="897" y="604" width="1" height="2"/>
<rect x="810" y="604" width="1" height="2"/>
<rect x="823" y="603" width="1" height="1"/>
<rect x="818" y="609" width="1" height="2"/>
<rect x="822" y="609" width="1" height="1"/>
<rect x="841" y="616" width="1" height="1"/>
<rect x="998" y="622" width="1" height="1"/>
<rect x="936" y="624" width="1" height="1"/>
<rect x="839" y="631" width="1" height="1"/>
<circle cx="920.7" cy="641.1" r="3.7"/>
<rect x="940" y="647" width="1" height="1"/>
<rect x="991" y="645" width="1" height="1"/>
<circle cx="831.1" cy="654.6" r="2.2"/>
<rect x="1001" y="526" width="1" height="1"/>
<rect x="1004" y="523" width="1" height="1"/>
<circle cx="1004.9" cy="532.1" r="2.7"/>
<rect x="1006" y="543" width="1" height="1"/>
<circle cx="1014" cy="557.1" r="2.2"/>
<rect x="1022" y="613" width="1" height="1"/>
<rect x="1018" y="617" width="1" height="1"/>
<circle cx="1012.1" cy="636.8" r="2.7"/>
<circle cx="1001.2" cy="656.2" r="2.2"/>
<rect x="1000" y="660" width="1" height="1"/>
<rect x="1016" y="667" width="1" height="1"/>
<rect x="933" y="657" width="1" height="1"/>
<rect x="800" y="668" width="1" height="1"/>
<rect x="875" y="665" width="1" height="1"/>
<rect x="969" y="661" width="1" height="2"/>
<rect x="851" y="676" width="1" height="1"/>
<rect x="862" y="677" width="1" height="1"/>
<rect x="856" y="680" width="1" height="2"/>
<rect x="876" y="679" width="1" height="1"/>
<rect x="905" y="674" width="1" height="2"/>
<rect x="932" y="673" width="1" height="2"/>
<rect x="809" y="690" width="1" height="1"/>
<rect x="888" y="695" width="1" height="2"/>
<rect x="885" y="698" width="1" height="2"/>
<rect x="851" y="699" width="1" height="2"/>
<rect x="854" y="698" width="1" height="2"/>
<rect x="859" y="705" width="1" height="2"/>
<rect x="876" y="705" width="1" height="1"/>
<rect x="812" y="704" width="1" height="1"/>
<circle cx="913.8" cy="704.9" r="2.2"/>
<circle cx="942.9" cy="700.8" r="3.2"/>
<rect x="965" y="706" width="1" height="2"/>
<rect x="945" y="711" width="1" height="2"/>
<rect x="909" y="710" width="1" height="1"/>
<rect x="825" y="711" width="1" height="1"/>
<rect x="870" y="711" width="1" height="1"/>
<rect x="873" y="715" width="1" height="1"/>
<rect x="845" y="717" width="1" height="1"/>
<rect x="905" y="719" width="1" height="1"/>
<rect x="982" y="724" width="1" height="1"/>
<rect x="810" y="732" width="1" height="1"/>
<rect x="830" y="732" width="1" height="1"/>
<rect x="908" y="739" width="1" height="1"/>
<rect x="913" y="743" width="1" height="1"/>
<rect x="997" y="689" width="1" height="1"/>
<rect x="1008" y="707" width="1" height="2"/>
<rect x="1016" y="723" width="1" height="2"/>
<rect x="1014" y="729" width="1" height="1"/>
<rect x="987" y="736" width="1" height="1"/>
<rect x="645" y="657" width="1" height="1"/>
<circle cx="718.8" cy="658.8" r="2.2"/>
<rect x="777" y="658" width="1" height="1"/>
<circle cx="669.9" cy="669.8" r="2.2"/>
<rect x="641" y="670" width="1" height="1"/>
<rect x="674" y="678" width="1" height="1"/>
<rect x="683" y="677" width="1" height="1"/>
<rect x="739" y="675" width="1" height="1"/>
<rect x="754" y="675" width="1" height="1"/>
<rect x="622" y="682" width="1" height="1"/>
<rect x="676" y="688" width="1" height="2"/>
<rect x="709" y="688" width="1" height="2"/>
<rect x="731" y="695" width="1" height="1"/>
<rect x="734" y="698" width="1" height="1"/>
<rect x="710" y="700" width="1" height="2"/>
<circle cx="796.9" cy="700.8" r="2.2"/>
<rect x="665" y="706" width="1" height="1"/>
<rect x="748" y="705" width="1" height="1"/>
<rect x="785" y="703" width="1" height="1"/>
<rect x="666" y="713" width="1" height="1"/>
<rect x="679" y="714" width="1" height="1"/>
<circle cx="733.8" cy="713.7" r="2.2"/>
<rect x="741" y="718" width="1" height="1"/>
<rect x="790" y="711" width="1" height="2"/>
<rect x="780" y="714" width="1" height="1"/>
<rect x="625" y="725" width="1" height="1"/>
<rect x="646" y="727" width="1" height="1"/>
<rect x="787" y="725" width="1" height="2"/>
<rect x="731" y="734" width="1" height="1"/>
<rect x="683" y="738" width="1" height="1"/>
<rect x="728" y="738" width="1" height="2"/>
<rect x="402" y="655" width="1" height="2"/>
<rect x="436" y="664" width="1" height="1"/>
<rect x="442" y="663" width="1" height="1"/>
<rect x="442" y="669" width="1" height="1"/>
<rect x="402" y="672" width="1" height="1"/>
<rect x="407" y="674" width="1" height="1"/>
<rect x="408" y="680" width="1" height="1"/>
<rect x="420" y="677" width="1" height="1"/>
<rect x="439" y="679" width="1" height="1"/>
<rect x="485" y="676" width="1" height="1"/>
<circle cx="547.9" cy="665.9" r="2.2"/>
<rect x="577" y="661" width="1" height="2"/>
<rect x="483" y="691" width="1" height="1"/>
<rect x="561" y="688" width="1" height="2"/>
<rect x="577" y="693" width="1" height="1"/>
<rect x="582" y="696" width="1" height="1"/>
<rect x="433" y="697" width="1" height="2"/>
<circle cx="454.1" cy="696.9" r="2.2"/>
<rect x="466" y="695" width="1" height="1"/>
<rect x="466" y="699" width="1" height="1"/>
<circle cx="525" cy="697.9" r="3.7"/>
<rect x="526" y="704" width="1" height="1"/>
<circle cx="450.8" cy="705.9" r="4.2"/>
<rect x="408" y="707" width="1" height="1"/>
<rect x="442" y="709" width="1" height="1"/>
<rect x="430" y="713" width="1" height="1"/>
<rect x="461" y="716" width="1" height="2"/>
<rect x="560" y="710" width="1" height="2"/>
<circle cx="592" cy="708.8" r="2.7"/>
<rect x="575" y="719" width="1" height="1"/>
<rect x="577" y="726" width="1" height="1"/>
<rect x="531" y="724" width="1" height="1"/>
<rect x="536" y="727" width="1" height="1"/>
<rect x="517" y="732" width="1" height="1"/>
<rect x="426" y="733" width="1" height="2"/>
<rect x="406" y="737" width="1" height="1"/>
<rect x="584" y="737" width="1" height="2"/>
<rect x="229" y="658" width="1" height="1"/>
<rect x="261" y="659" width="1" height="2"/>
<rect x="329" y="655" width="1" height="2"/>
<circle cx="362.7" cy="655.9" r="2.2"/>
<rect x="390" y="657" width="1" height="2"/>
<rect x="389" y="663" width="1" height="2"/>
<rect x="304" y="663" width="1" height="1"/>
<rect x="350" y="664" width="1" height="2"/>
<rect x="208" y="670" width="1" height="1"/>
<rect x="371" y="671" width="1" height="2"/>
<rect x="207" y="683" width="1" height="1"/>
<rect x="240" y="684" width="1" height="1"/>
<rect x="325" y="684" width="1" height="1"/>
<rect x="254" y="691" width="1" height="1"/>
<rect x="333" y="694" width="1" height="1"/>
<rect x="205" y="697" width="1" height="1"/>
<circle cx="232.8" cy="697.9" r="2.2"/>
<circle cx="360.7" cy="700.8" r="2.2"/>
<rect x="370" y="698" width="1" height="2"/>
<rect x="220" y="709" width="1" height="2"/>
<rect x="238" y="710" width="1" height="1"/>
<rect x="255" y="716" width="1" height="2"/>
<rect x="222" y="721" width="1" height="1"/>
<circle cx="206.8" cy="728.8" r="2.2"/>
<rect x="228" y="729" width="1" height="1"/>
<rect x="290" y="728" width="1" height="2"/>
<rect x="267" y="734" width="1" height="1"/>
<rect x="263" y="737" width="1" height="1"/>
<rect x="259" y="739" width="1" height="2"/>
<rect x="268" y="740" width="1" height="1"/>
<circle cx="284.6" cy="740.9" r="2.7"/>
<rect x="318" y="740" width="1" height="1"/>
<rect x="387" y="737" width="1" height="1"/>
<rect x="84" y="657" width="1" height="1"/>
<rect x="196" y="665" width="1" height="1"/>
<rect x="141" y="670" width="1" height="1"/>
<rect x="76" y="680" width="1" height="2"/>
<rect x="90" y="680" width="1" height="2"/>
<rect x="94" y="683" width="1" height="1"/>
<rect x="97" y="681" width="1" height="2"/>
<rect x="191" y="688" width="1" height="1"/>
<rect x="52" y="700" width="1" height="2"/>
<rect x="70" y="702" width="1" height="1"/>
<rect x="84" y="698" width="1" height="1"/>
<rect x="132" y="701" width="1" height="2"/>
<rect x="129" y="704" width="1" height="2"/>
<rect x="59" y="713" width="1" height="1"/>
<rect x="138" y="715" width="1" height="1"/>
<rect x="138" y="720" width="1" height="1"/>
<rect x="171" y="719" width="1" height="1"/>
<rect x="67" y="737" width="1" height="2"/>
<rect x="96" y="736" width="1" height="1"/>
<rect x="133" y="735" width="1" height="2"/>
<rect x="62" y="742" width="1" height="1"/>
<rect x="91" y="742" width="1" height="1"/>
<circle cx="754.8" cy="43.9" r="3.7"/>
<rect x="738" y="43" width="1" height="1"/>
<rect x="758" y="38" width="1" height="1"/>
<rect x="766" y="45" width="1" height="1"/>
<rect x="760" y="50" width="1" height="2"/>
<rect x="760" y="53" width="1" height="2"/>
<rect x="792" y="36" width="1" height="1"/>
<rect x="813" y="33" width="1" height="1"/>
<rect x="837" y="35" width="1" height="1"/>
<rect x="1000" y="36" width="1" height="1"/>
<rect x="597" y="64" width="1" height="1"/>
<rect x="599" y="72" width="1" height="2"/>
<rect x="400" y="205" width="1" height="1"/>
</g>
</svg>

<!-- info text -->
<div class="a w" style="left:20px;top:63px">Feld:</div>
<div class="a w" style="left:77px;top:63px">29</div>
<div class="a w" style="left:105px;top:63px">x</div>
<div class="a w" style="left:133px;top:63px">20 '</div>
<div class="a w" style="left:20px;top:87px">RA:</div>
<div class="a w" style="left:20px;top:111px">DEC:</div>
<div class="a y" style="left:20px;top:135px">U4:</div>
<div class="a y" style="right:828px;top:87px">19: 05 07.4</div>
<div class="a y" style="right:828px;top:111px">-23° 04 59</div>
<div class="a y" style="right:828px;top:135px">335-196887</div>
<div class="a y" style="left:20px;top:159px">Magnitude:</div>
<div class="a y" style="right:828px;top:159px">13.3</div>
<div class="a y" style="left:20px;top:183px">Typ:</div>
<div class="a y" style="right:828px;top:183px">Stern</div>
<div class="a y" style="left:20px;top:207px">Untergang</div>
<div class="a y" style="left:102px;top:207px">00:38</div>
<div class="a y" style="left:153px;top:207px">Aufgang</div>
<div class="a y" style="left:219px;top:207px">16:13</div>
<div class="a y" style="left:20px;top:231px">Meridian:</div>
<div class="a y" style="right:828px;top:231px">≈ 20:30</div>

<div class="a w" style="left:273px;top:63px">Az:</div>
<div class="a w" style="left:361px;top:63px">S</div>
<div class="a w" style="left:438px;top:63px">Alt:</div>
<div class="a w" style="left:520px;top:63px">19</div>
<div class="a w" style="right:674px;top:87px">19: 04 30.7</div>
<div class="a w" style="right:674px;top:111px">-23° 09 45</div>

<div class="a w" style="left:877px;top:40px">2025-09-20</div>
<div class="a w" style="left:971px;top:40px">20.00</div>

<div class="a" style="left:469px;top:309px;font-size:22px;color:#fff;transform:scaleX(1.035);transform-origin:0 0">Target star UCAC4 335-196887</div>

<!-- legend -->
<svg class="a" style="left:0;top:580px" width="50" height="164" viewBox="0 580 50 164" fill="#fff">
<rect x="15" y="604" width="1" height="1"/>
<rect x="15" y="618" width="1" height="1"/>
<rect x="15" y="632" width="1" height="1"/>
<rect x="14" y="645" width="1" height="2"/>
<circle cx="15" cy="660.5" r="2"/>
<circle cx="14.8" cy="674" r="2.8"/>
<circle cx="14.8" cy="688" r="3.6"/>
<circle cx="14.8" cy="702" r="4.6"/>
<circle cx="14.8" cy="716" r="5.6"/>
<circle cx="14.8" cy="730" r="7"/>
</svg>
<div class="lg" style="top:591px">18</div><div class="lu" style="top:604px"></div>
<div class="lg" style="top:605px">17</div><div class="lu" style="top:618px"></div>
<div class="lg" style="top:619px">16</div><div class="lu" style="top:632px"></div>
<div class="lg" style="top:633px">15</div><div class="lu" style="top:646px"></div>
<div class="lg" style="top:647px">14</div><div class="lu" style="top:660px"></div>
<div class="lg" style="top:661px">13</div><div class="lu" style="top:674px"></div>
<div class="lg" style="top:675px">12</div><div class="lu" style="top:688px"></div>
<div class="lg" style="top:689px">11</div><div class="lu" style="top:702px"></div>
<div class="lg" style="top:703px">10</div><div class="lu" style="top:716px"></div>
<div class="lg" style="top:717px;left:25px">9</div><div class="lu" style="top:730px;width:13px"></div>

<!-- status bar -->
<div class="a" style="left:1px;top:744px;width:1022px;height:23px;box-sizing:border-box;border-top:1px solid #a0a0a0;border-left:1px solid #a0a0a0;border-right:1px solid #f0f0f0;border-bottom:1px solid #f0f0f0"></div>
<div class="a" style="left:0;top:767px;width:1024px;height:1px;background:#505050"></div>
</body></html>
